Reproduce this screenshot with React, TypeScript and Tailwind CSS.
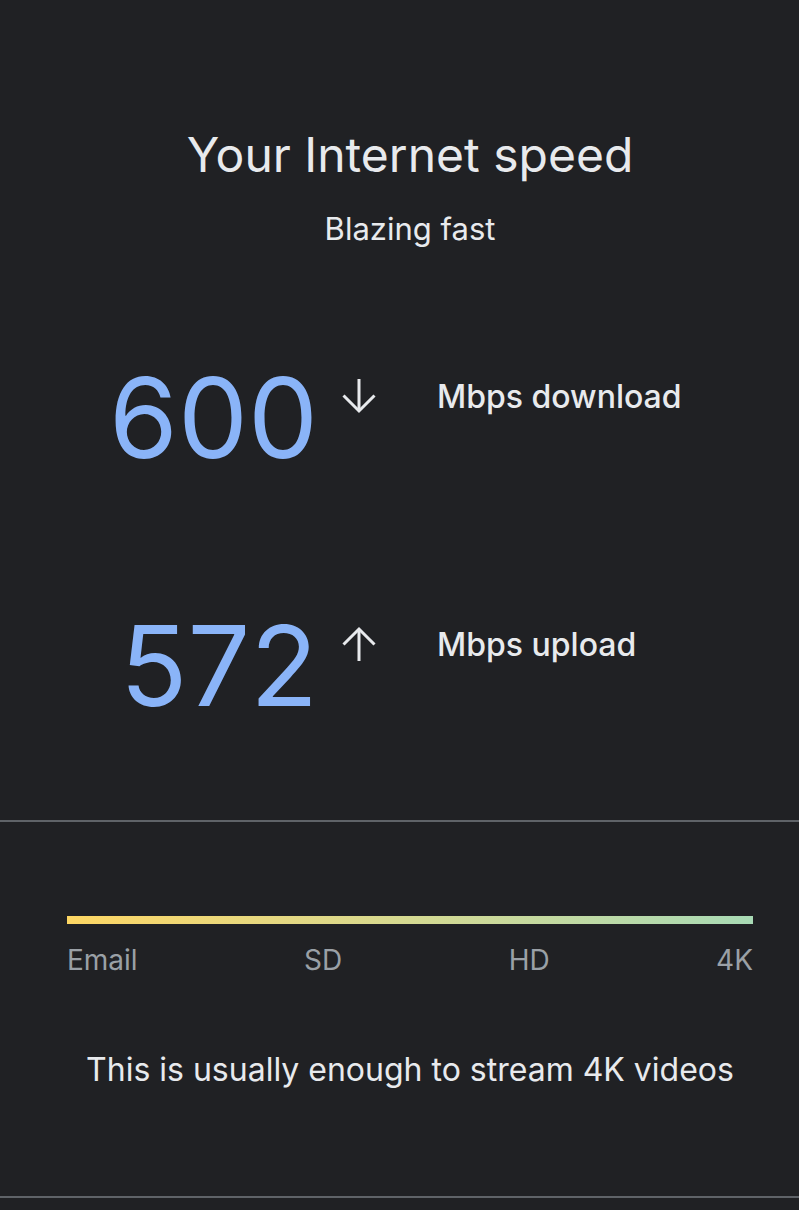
import React from 'react';

function Arrow({ up }: { up?: boolean }) {
  return (
    <svg width="36" height="36" viewBox="0 0 36 36" fill="none" stroke="#e8eaed" strokeWidth="3">
      {up ? (
        <>
          <path d="M18 35V3" />
          <path d="M2.5 18.5L18 3l15.5 15.5" />
        </>
      ) : (
        <>
          <path d="M18 1v32" />
          <path d="M2.5 17.5L18 33l15.5-15.5" />
        </>
      )}
    </svg>
  );
}

function SpeedRow({ value, up, label }: { value: string; up?: boolean; label: string }) {
  return (
    <div className="grid grid-cols-[318px_119px_1fr] items-start">
      <div className="text-right text-[111px] leading-none text-[#8ab4f8]">{value}</div>
      <div className="pl-[23px] pt-[16px]">
        <Arrow up={up} />
      </div>
      <div className="pt-[19px] text-[32px] leading-none font-medium text-[#e8eaed]">{label}</div>
    </div>
  );
}

export default function App() {
  return (
    <div className="min-h-[1210px] w-[799px] bg-[#202124] font-['Inter','Open_Sans',sans-serif] overflow-hidden">
      <div className="pt-[131px] pl-[21px] text-center">
        <h1 className="text-[48px] leading-none text-[#e8eaed] font-normal">Your Internet speed</h1>
        <p className="mt-[34px] text-[31px] leading-none text-[#e8eaed]">Blazing fast</p>
      </div>

      <div className="mt-[118px] flex flex-col gap-[137px]">
        <SpeedRow value="600" label="Mbps download" />
        <SpeedRow value="572" up label="Mbps upload" />
      </div>

      <div className="mt-[99px] h-[2px] bg-[#5f6368]" />

      <div className="pl-[67px] pr-[46px] pt-[94px]">
        <div className="h-[8px] bg-gradient-to-r from-[#fdd663] to-[#a8dab5]" />
        <div className="mt-[22px] flex justify-between text-[28px] leading-none text-[#9aa0a6]">
          <span>Email</span>
          <span>SD</span>
          <span>HD</span>
          <span>4K</span>
        </div>
      </div>

      <p className="mt-[80px] pl-[21px] text-center text-[32px] leading-none text-[#e8eaed]">
        This is usually enough to stream 4K videos
      </p>

      <div className="mt-[110px] h-[2px] bg-[#5f6368]" />
    </div>
  );
}
